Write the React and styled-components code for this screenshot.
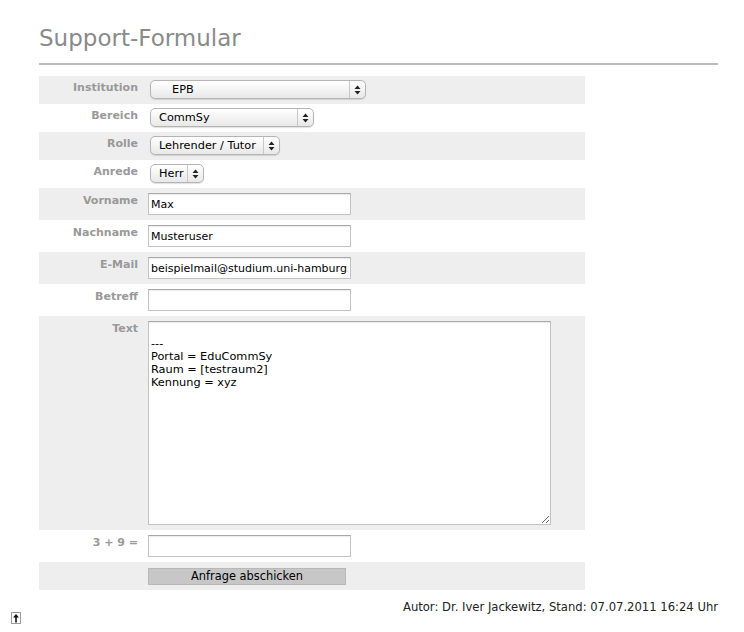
import React from "react";
import styled, { createGlobalStyle } from "styled-components";

const GlobalStyle = createGlobalStyle`
  html, body {
    margin: 0;
    padding: 0;
    background: #fff;
  }
  body {
    font-family: "DejaVu Sans", Verdana, sans-serif;
    font-size: 11px;
    color: #000;
  }
`;

const fields = [
  { label: "Institution", kind: "select", value: "EPB", width: 216, indent: 21 },
  { label: "Bereich", kind: "select", value: "CommSy", width: 164 },
  { label: "Rolle", kind: "select", value: "Lehrender / Tutor", width: 130 },
  { label: "Anrede", kind: "select", value: "Herr", width: 54 },
  { label: "Vorname", kind: "input", value: "Max" },
  { label: "Nachname", kind: "input", value: "Musteruser" },
  { label: "E-Mail", kind: "input", value: "beispielmail@studium.uni-hamburg.de" },
  { label: "Betreff", kind: "input", value: "" },
  { label: "Text", kind: "textarea", value: "\n---\nPortal = EduCommSy\nRaum = [testraum2]\nKennung = xyz" },
  { label: "3 + 9 =", kind: "input", value: "" },
];

export default function App() {
  return (
    <Page>
      <GlobalStyle />
      <Title>Support-Formular</Title>
      <Form onSubmit={(e) => e.preventDefault()}>
        {fields.map((f, i) => (
          <Row key={f.label} $shaded={i % 2 === 0} $tall={f.kind !== "select"}>
            <Label>{f.label}</Label>
            <Cell>
              {f.kind === "select" && (
                <Popup $w={f.width}>
                  <PopupText $indent={f.indent}>{f.value}</PopupText>
                  <PopupArrows>
                    <svg width="7" height="10" viewBox="0 0 7 10">
                      <path d="M3.5 0.5 L6.5 4 L0.5 4 Z" fill="#222" />
                      <path d="M3.5 9.5 L6.5 6 L0.5 6 Z" fill="#222" />
                    </svg>
                  </PopupArrows>
                </Popup>
              )}
              {f.kind === "input" && <TextInput defaultValue={f.value} />}
              {f.kind === "textarea" && <TextArea defaultValue={f.value} />}
            </Cell>
          </Row>
        ))}
        <Row $shaded $button>
          <Label />
          <Cell>
            <SubmitButton type="submit">Anfrage abschicken</SubmitButton>
          </Cell>
        </Row>
      </Form>
      <Footer>Autor: Dr. Iver Jackewitz, Stand: 07.07.2011 16:24 Uhr</Footer>
      <TopLink href="#">
        <svg width="8" height="10" viewBox="0 0 8 10">
          <path d="M4 1 L7 4.5 L4.8 4.5 L4.8 9.5 L3.2 9.5 L3.2 4.5 L1 4.5 Z" fill="#111" />
        </svg>
      </TopLink>
    </Page>
  );
}

const Page = styled.div`
  position: relative;
  width: 679px;
  padding: 25px 0 0 39px;
  min-height: 607px;
`;

const Title = styled.h1`
  margin: 0;
  padding-bottom: 12px;
  font-family: "DejaVu Sans", Verdana, sans-serif;
  font-weight: normal;
  font-size: 23px;
  line-height: 26px;
  color: #8a8a8a;
  border-bottom: 2px solid #bcbcbc;
`;

const Form = styled.form`
  width: 546px;
  margin-top: 11px;
`;

const Row = styled.div`
  display: grid;
  grid-template-columns: 99px 1fr;
  column-gap: 10px;
  align-items: start;
  background: ${({ $shaded }) => ($shaded ? "#eeeeee" : "#fff")};
  padding: ${({ $tall, $button }) =>
    $button ? "6px 0 5px" : $tall ? "5px 0" : "4px 0 5px"};
`;

const Label = styled.div`
  text-align: right;
  font-weight: bold;
  font-size: 11px;
  line-height: 15px;
  color: #999999;
`;

const Cell = styled.div`
  display: flex;
  align-items: flex-start;
`;

const Popup = styled.div`
  box-sizing: border-box;
  width: ${({ $w }) => $w}px;
  height: 19px;
  margin-left: 2px;
  display: flex;
  align-items: stretch;
  border: 1px solid #b4b4b4;
  border-radius: 5px;
  background: linear-gradient(#ffffff, #f4f4f4 50%, #e8e8e8);
  box-shadow: 0 1px 1px rgba(0, 0, 0, 0.12);
`;

const PopupText = styled.span`
  flex: 1;
  padding-left: ${({ $indent }) => $indent || 8}px;
  font-size: 11.3px;
  line-height: 17px;
  white-space: nowrap;
  overflow: hidden;
`;

const PopupArrows = styled.span`
  width: 15px;
  display: flex;
  align-items: center;
  justify-content: center;
  border-left: 1px solid #c8c8c8;
`;

const TextInput = styled.input`
  box-sizing: border-box;
  width: 203px;
  height: 22px;
  margin: 0;
  padding: 2px 2px 1px;
  border: 1px solid #c2c2c2;
  border-top-color: #a8a8a8;
  box-shadow: inset 0 1px 1px rgba(0, 0, 0, 0.08);
  font-family: "DejaVu Sans", Verdana, sans-serif;
  font-size: 11px;
  color: #000;
  background: #fff;
  outline: none;
`;

const TextArea = styled.textarea`
  box-sizing: border-box;
  width: 403px;
  height: 204px;
  margin: 0;
  padding: 2px 2px;
  border: 1px solid #c2c2c2;
  border-top-color: #a8a8a8;
  box-shadow: inset 0 1px 1px rgba(0, 0, 0, 0.08);
  font-family: "DejaVu Sans", Verdana, sans-serif;
  font-size: 11.3px;
  line-height: 13px;
  color: #000;
  background: #fff;
  outline: none;
`;

const SubmitButton = styled.button`
  box-sizing: border-box;
  width: 198px;
  height: 17px;
  margin: 0;
  padding: 0;
  border: 1px solid #b8b8b8;
  background: #c7c7c7;
  font-family: "DejaVu Sans", Verdana, sans-serif;
  font-size: 11.4px;
  line-height: 15px;
  color: #000;
`;

const Footer = styled.div`
  margin-top: 10px;
  text-align: right;
  font-size: 11.6px;
  line-height: 14px;
  color: #222;
`;

const TopLink = styled.a`
  position: absolute;
  left: 11px;
  top: 612px;
  box-sizing: border-box;
  width: 10px;
  height: 12px;
  border: 1px solid #9a9a9a;
  display: flex;
  align-items: center;
  justify-content: center;
  background: #fff;
`;
